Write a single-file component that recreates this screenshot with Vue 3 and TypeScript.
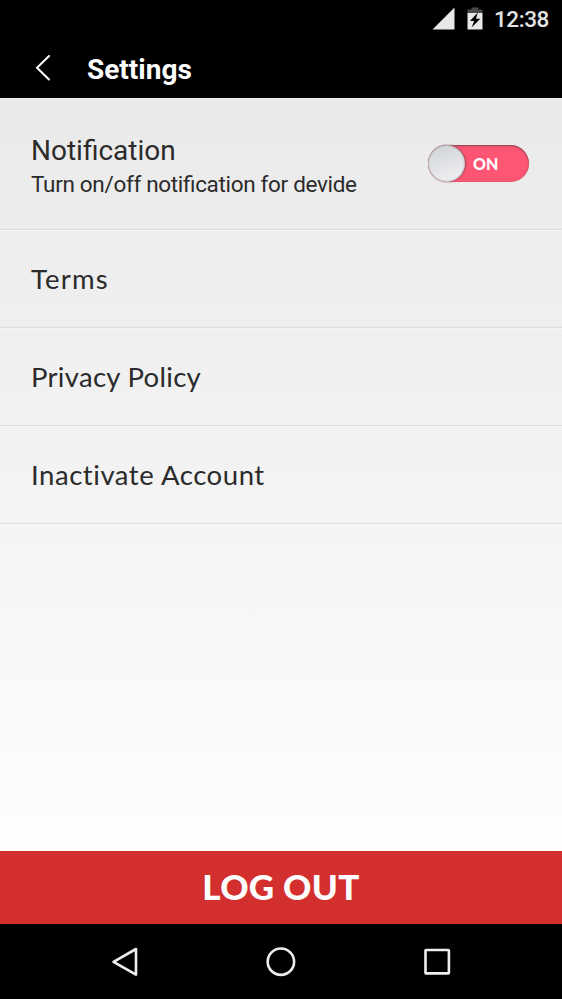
<script setup lang="ts">
import { ref } from 'vue'

interface SettingItem {
  id: string
  label: string
}

const items: SettingItem[] = [
  { id: 'terms', label: 'Terms' },
  { id: 'privacy', label: 'Privacy Policy' },
  { id: 'inactivate', label: 'Inactivate Account' },
]

const notifications = ref(true)
</script>

<template>
  <div class="screen">
    <div class="status">
      <svg class="signal" width="24" height="24" viewBox="0 0 24 24"><path d="M0.5 22.500 22.500 0.500V22.500Z" fill="#e8e8e8" /></svg>
      <svg class="battery" width="16" height="24" viewBox="0 0 16 24">
        <path d="M4.500 0.500h7v2h4V6H0.500V2.500h4Z" fill="#4a4a4a" />
        <path d="M0.500 6h15v16.500h-15Z" fill="#e8e8e8" />
        <path d="M10.800 5.500 3 14h4.200l-2.600 6.500L13.300 11.800H9Z" fill="#000" />
      </svg>
      <span class="clock">12:38</span>
    </div>
    <header class="bar">
      <svg class="back" width="18" height="30" viewBox="0 0 18 30"><path d="M15 3 3 14.800 15 26.500" fill="none" stroke="#fff" stroke-width="2" stroke-linecap="round" /></svg>
      <h1 class="title">Settings</h1>
    </header>
    <main class="content">
      <section class="row notification">
        <div class="copy">
          <div class="name">Notification</div>
          <div class="hint">Turn on/off notification for devide</div>
        </div>
        <button class="toggle" :class="{ off: !notifications }" @click="notifications = !notifications">
          <span class="knob"></span>
          <span class="state">{{ notifications ? 'ON' : 'OFF' }}</span>
        </button>
      </section>
      <div v-for="item in items" :key="item.id" class="row link">
        <span class="label" :class="item.id">{{ item.label }}</span>
      </div>
    </main>
    <button class="logout"><span>LOG OUT</span></button>
    <nav class="nav">
      <svg width="30" height="34" viewBox="0 0 30 34"><path d="M26 4V29.600L3.500 16.800Z" fill="none" stroke="#eee" stroke-width="2.600" stroke-linejoin="round" /></svg>
      <svg width="34" height="34" viewBox="0 0 34 34"><circle cx="16.900" cy="16.700" r="13.200" fill="none" stroke="#eee" stroke-width="2.600" /></svg>
      <svg width="30" height="34" viewBox="0 0 30 34"><rect x="3.500" y="5" width="23.400" height="23.400" rx="0.600" fill="none" stroke="#eee" stroke-width="2.600" /></svg>
    </nav>
  </div>
</template>

<style>
body {
  margin: 0;
  background: #000;
}
</style>

<style scoped>
.screen {
  width: 562px;
  height: 999px;
  display: flex;
  flex-direction: column;
  background: #000;
  font-family: Roboto, sans-serif;
  color: #2b2b2b;
  overflow: hidden;
}
.status {
  height: 38px;
  box-sizing: border-box;
  display: flex;
  justify-content: flex-end;
  align-items: center;
  padding-right: 13px;
}
.signal {
  margin-right: 11px;
}
.battery {
  margin-right: 11px;
}
.clock {
  color: #e4e4e4;
  font-size: 22.5px;
  font-weight: 500;
  line-height: 38px;
  letter-spacing: -0.4px;
}
.bar {
  height: 60px;
  display: flex;
  align-items: center;
  padding-left: 34px;
}
.title {
  margin: 4px 0 0 35px;
  color: #fff;
  font-size: 28px;
  font-weight: 700;
  line-height: 34px;
}
.content {
  flex: 1;
  background: linear-gradient(#eaeaea, #f3f3f3 50%, #fefefe);
}
.row {
  box-sizing: border-box;
  height: 98px;
  padding: 0 33px 0 31px;
  display: flex;
  align-items: center;
  border-bottom: 1px solid #dedede;
  box-shadow: 0 1px 0 rgba(255, 255, 255, 0.35), inset 0 -1px 0 rgba(0, 0, 0, 0.02);
}
.notification {
  height: 132px;
  justify-content: space-between;
}
.copy {
  padding-top: 6px;
}
.name {
  font-size: 28px;
  line-height: 34px;
}
.hint {
  font-size: 22.5px;
  line-height: 32px;
  white-space: nowrap;
  letter-spacing: -0.32px;
  font-feature-settings: 'liga' 1;
}
.toggle {
  width: 101px;
  height: 37px;
  padding: 0;
  border: 0;
  border-radius: 19px;
  display: flex;
  align-items: center;
  background: #fd5674;
  box-shadow: inset 0 1px 2px #8b4753, inset 0 0 1px #a66;
}
.knob {
  width: 37px;
  height: 37px;
  border-radius: 50%;
  background: linear-gradient(160deg, #cfd2d6, #f2f3f4);
  box-shadow: inset 0 0 2px #777, 1px 0 2px #a04458;
}
.state {
  margin-left: 8px;
  color: #fff;
  font: 900 16px Lato, sans-serif;
}
.toggle.off {
  background: #b5b5b5;
}
.label {
  font-family: Lato, sans-serif;
  font-size: 27.5px;
  line-height: 34px;
}
.terms {
  letter-spacing: 1.2px;
}
.privacy {
  letter-spacing: 0.3px;
}
.inactivate {
  letter-spacing: 0.55px;
}
.logout {
  height: 73px;
  border: 0;
  padding: 0 0 3px;
  background: #d32f2f;
  color: #fff;
  font: 900 35px/40px Lato, sans-serif;
  letter-spacing: 0.3px;
}
.nav {
  height: 75px;
  display: flex;
  justify-content: space-between;
  align-items: center;
  padding: 0 110px;
}
</style>
